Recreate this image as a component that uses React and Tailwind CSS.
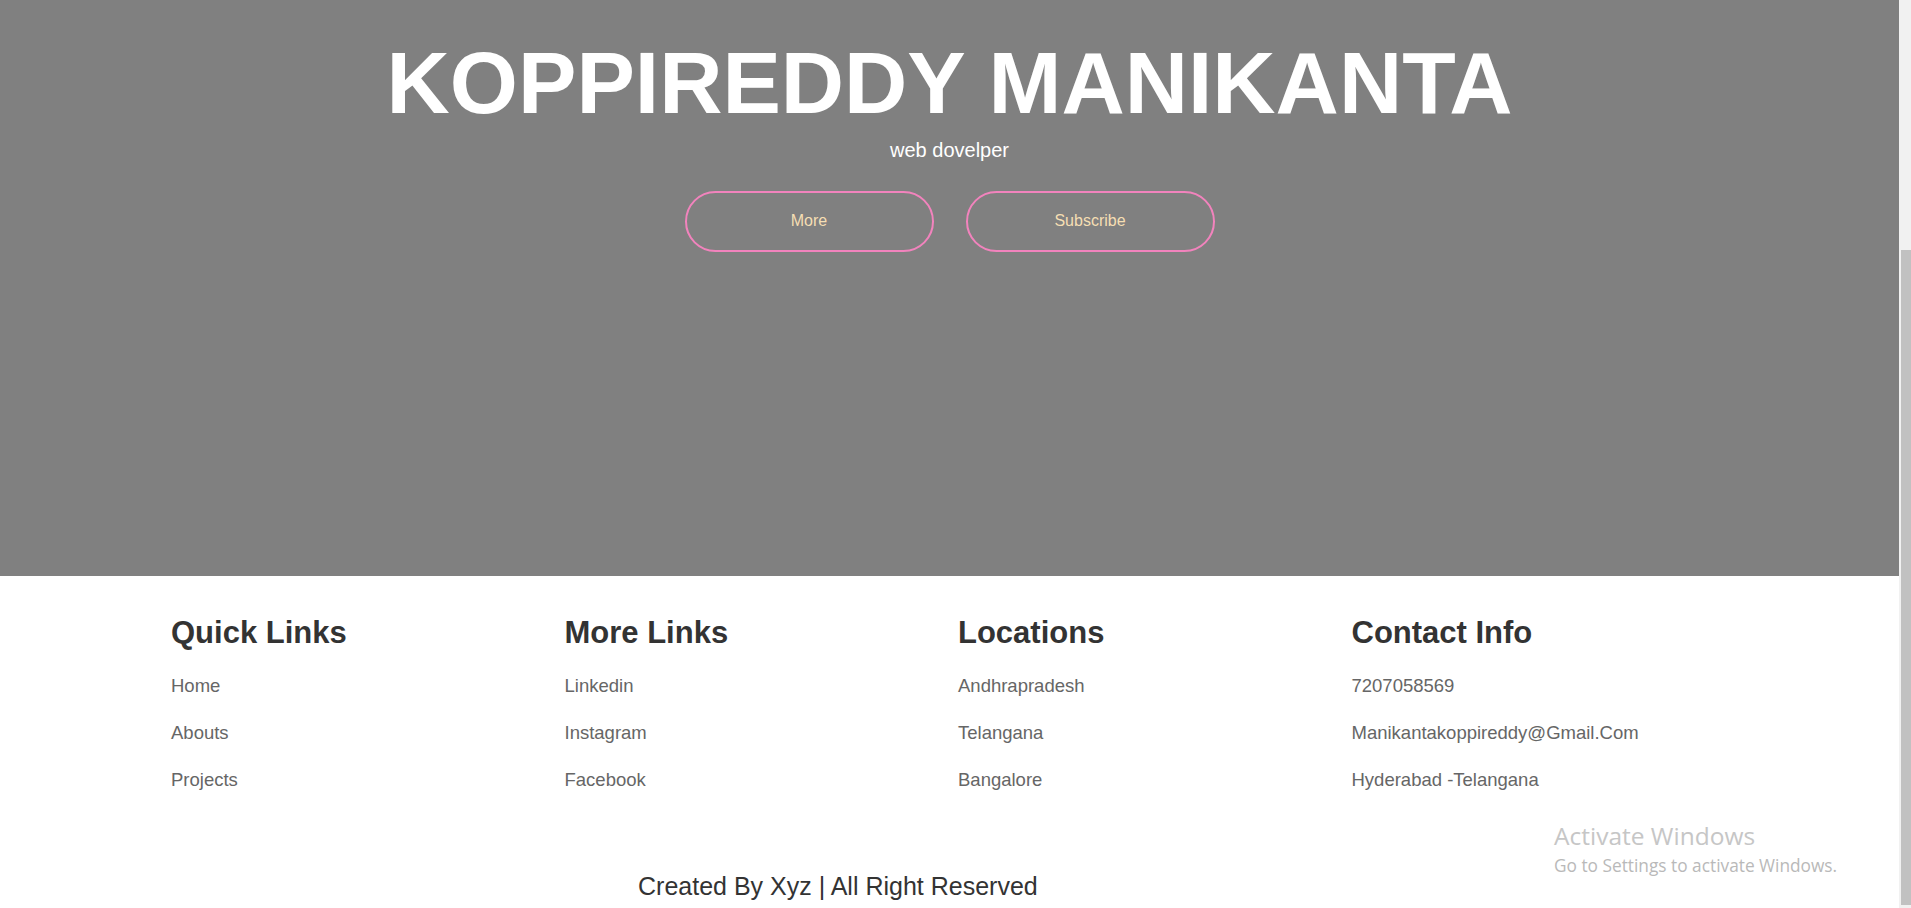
import React from "react";

const columns = [
  { title: "Quick Links", items: ["Home", "Abouts", "Projects"] },
  { title: "More Links", items: ["Linkedin", "Instagram", "Facebook"] },
  { title: "Locations", items: ["Andhrapradesh", "Telangana", "Bangalore"] },
  {
    title: "Contact Info",
    items: ["7207058569", "Manikantakoppireddy@Gmail.Com", "Hyderabad -Telangana"],
  },
];

const App = () => {
  return (
    <div className="relative flex h-[908px] w-full overflow-hidden bg-white font-['Liberation_Sans',Arial,sans-serif]">
      <div className="flex min-w-0 flex-1 flex-col">
        {/* hero */}
        <section className="flex h-[576px] shrink-0 flex-col items-center bg-[#808080] pt-[40px]">
          <h1 className="text-[87.6px] font-bold leading-none text-white">KOPPIREDDY MANIKANTA</h1>
          <p className="mt-[12px] text-[20px] leading-none text-white">web dovelper</p>
          <div className="mt-[31px] flex gap-[32px]">
            <button className="h-[61px] w-[249px] rounded-full border-2 border-[#f283bd] text-[16px] text-[#f5deb3]">
              More
            </button>
            <button className="h-[61px] w-[249px] rounded-full border-2 border-[#f283bd] text-[16px] text-[#f5deb3]">
              Subscribe
            </button>
          </div>
        </section>

        {/* footer */}
        <footer className="shrink-0 pt-[41px]">
          <div className="grid grid-cols-[repeat(4,393.5px)] pl-[171px]">
            {columns.map((col) => (
              <div key={col.title} className="flex flex-col">
                <h3 className="text-[31px] font-bold leading-none text-[#333]">{col.title}</h3>
                <ul className="mt-[28.5px] flex flex-col gap-[28.5px]">
                  {col.items.map((item) => (
                    <li key={item} className="leading-none">
                      <a href="#" className="block text-[18.5px] leading-none text-[#666]">
                        {item}
                      </a>
                    </li>
                  ))}
                </ul>
              </div>
            ))}
          </div>
          <p className="mt-[85px] pl-[638px] text-[25px] leading-none text-[#333]">
            Created By Xyz | All Right Reserved
          </p>
        </footer>
      </div>

      {/* scrollbar */}
      <div className="flex w-[12px] shrink-0 flex-col bg-[#f1f1f1] pt-[250px] pb-[3px]">
        <div className="ml-[2px] flex-1 bg-[#c1c1c1]" />
      </div>

      {/* windows watermark */}
      <div className="pointer-events-none absolute left-[1554px] top-[821px] font-['Open_Sans',sans-serif] text-[#c6c6c6]">
        <div className="text-[24.5px] leading-tight">Activate Windows</div>
        <div className="mt-[3px] text-[17.3px] leading-tight text-[#b9b9b9]">Go to Settings to activate Windows.</div>
      </div>
    </div>
  );
};

export default App;
